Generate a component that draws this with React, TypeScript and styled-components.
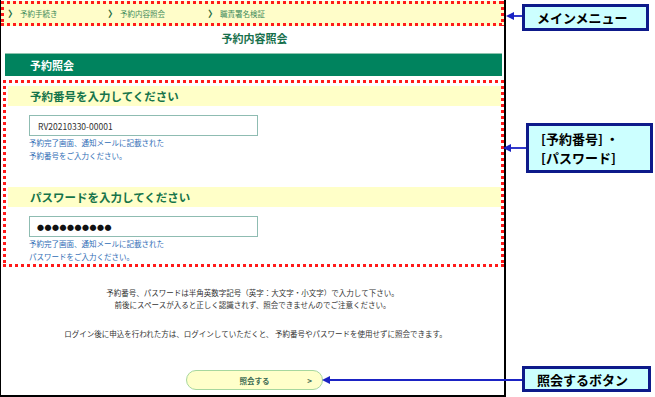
import styled, { createGlobalStyle } from "styled-components"

const GlobalStyle = createGlobalStyle`
    html, body {
        margin: 0;
        padding: 0;
        background: #ffffff;
    }
    body {
        font-family: "Noto Sans CJK JP", "Noto Sans", sans-serif;
        color: #333333;
    }
`

const menuItems = ["予約手続き", "予約内容照会", "職責署名検証"]

const fields = [
    { title: "予約番号を入力してください", value: "RV20210330-00001", hint: "予約番号をご入力ください。", dots: false },
    { title: "パスワードを入力してください", value: "●●●●●●●●●●", hint: "パスワードをご入力ください。", dots: true },
]

const callouts = [
    { top: 4, left: 522, width: 127, height: 27, lines: ["メインメニュー"] },
    { top: 123, left: 526, width: 127, height: 50, lines: ["[予約番号] ・", "[パスワード]"] },
    { top: 366, left: 522, width: 129, height: 26, lines: ["照会するボタン"] },
]

// arrow lines: from callout box to target (x1 -> x2), head at x2
const arrows = [
    { y: 16, from: 522, to: 506 },
    { y: 148, from: 526, to: 503 },
    { y: 380, from: 522, to: 322 },
]

export default function App() {
    return (
        <>
            <GlobalStyle />
            <Page>
                <Screen>
                    <MenuBar>
                        {menuItems.map((item) => (
                            <MenuItem key={item}>
                                <Chevron>〉</Chevron>
                                {item}
                            </MenuItem>
                        ))}
                    </MenuBar>
                    <PageTitle>予約内容照会</PageTitle>
                    <SectionBar>予約照会</SectionBar>
                    <FormFrame>
                        {fields.map((field, index) => (
                            <Field key={field.title} $first={index === 0}>
                                <FieldHeader>{field.title}</FieldHeader>
                                <InputBox $dots={field.dots}>{field.value}</InputBox>
                                <Hint>
                                    予約完了画面、通知メールに記載された
                                    <br />
                                    {field.hint}
                                </Hint>
                            </Field>
                        ))}
                    </FormFrame>
                    <Notes>
                        予約番号、パスワードは半角英数字記号（英字：大文字・小文字）で入力して下さい。
                        <br />
                        前後にスペースが入ると正しく認識されず、照会できませんのでご注意ください。
                    </Notes>
                    <LoginNote>
                        ログイン後に申込を行われた方は、ログインしていただくと、 予約番号やパスワードを使用せずに照会できます。
                    </LoginNote>
                    <SubmitButton>
                        照会する
                        <ButtonArrow>&gt;</ButtonArrow>
                    </SubmitButton>
                </Screen>

                <Arrows width="655" height="397" viewBox="0 0 655 397">
                    {arrows.map((a) => (
                        <g key={a.y}>
                            <line x1={a.from} y1={a.y} x2={a.to + 6} y2={a.y} stroke="#1b23c4" strokeWidth="1.8" />
                            <polygon
                                points={`${a.to},${a.y} ${a.to + 8},${a.y - 4} ${a.to + 8},${a.y + 4}`}
                                fill="#1b23c4"
                            />
                        </g>
                    ))}
                </Arrows>

                {callouts.map((c) => (
                    <Callout
                        key={c.lines[0]}
                        style={{ top: c.top, left: c.left, width: c.width, height: c.height }}
                    >
                        {c.lines.map((line) => (
                            <div key={line}>{line}</div>
                        ))}
                    </Callout>
                ))}
            </Page>
        </>
    )
}

const dotted = `
    background-image:
        repeating-linear-gradient(90deg, #ff1a1a 0 3px, transparent 3px 6px),
        repeating-linear-gradient(90deg, #ff1a1a 0 3px, transparent 3px 6px),
        repeating-linear-gradient(180deg, #ff1a1a 0 3px, transparent 3px 6px),
        repeating-linear-gradient(180deg, #ff1a1a 0 3px, transparent 3px 6px);
    background-size: 100% 3px, 100% 3px, 3px 100%, 3px 100%;
    background-position: top left, bottom left, top left, top right;
    background-repeat: no-repeat;
`

const Page = styled.div`
    position: relative;
    width: 655px;
    height: 397px;
    overflow: hidden;
`

const Screen = styled.div`
    box-sizing: border-box;
    width: 506px;
    height: 397px;
    border-left: 1px solid #000;
    border-right: 2px solid #000;
    border-bottom: 2px solid #000;
    display: flex;
    flex-direction: column;
`

const MenuBar = styled.div`
    ${dotted}
    background-color: #fffdc9;
    box-sizing: border-box;
    height: 25px;
    margin-top: 1px;
    display: flex;
    align-items: center;
    padding-left: 7px;
`

const MenuItem = styled.div`
    width: 100px;
    font-size: 7.5px;
    color: #3d8a5a;
    display: flex;
    align-items: center;
`

const Chevron = styled.span`
    font-size: 9px;
    font-weight: 900;
    margin-right: 3px;
    color: #1f6b40;
`

const PageTitle = styled.div`
    height: 24px;
    line-height: 24px;
    text-align: center;
    font-size: 11px;
    font-weight: bold;
    color: #17704c;
    padding-left: 4px;
`

const SectionBar = styled.div`
    margin: 3px 2px 0 4px;
    height: 23px;
    line-height: 23px;
    padding-left: 25px;
    background: #00835e;
    border-top: 1px solid #8cc4ae;
    box-sizing: border-box;
    color: #fff;
    font-size: 11px;
    font-weight: bold;
`

const FormFrame = styled.div`
    ${dotted}
    margin: 4px 0 0 2px;
    padding: 6px 3px 4px 5px;
    height: 187px;
    box-sizing: border-box;
    display: flex;
    flex-direction: column;
`

const Field = styled.div<{ $first: boolean }>`
    margin-top: ${(p) => (p.$first ? "0" : "25px")};
    display: flex;
    flex-direction: column;
`

const FieldHeader = styled.div`
    height: 20px;
    line-height: 20px;
    background: #ffffc8;
    padding-left: 22px;
    font-size: 11.5px;
    font-weight: bold;
    color: #16744a;
`

const InputBox = styled.div<{ $dots: boolean }>`
    margin: 9px 0 0 21px;
    width: 229px;
    height: 21px;
    box-sizing: border-box;
    border: 1px solid #8fbcb2;
    padding-left: ${(p) => (p.$dots ? "7px" : "8px")};
    display: flex;
    align-items: center;
    font-size: ${(p) => (p.$dots ? "7px" : "8.5px")};
    letter-spacing: ${(p) => (p.$dots ? "0.5px" : "0")};
    color: ${(p) => (p.$dots ? "#111" : "#333")};
`

const Hint = styled.div`
    margin-left: 21px;
    font-size: 7.5px;
    line-height: 13px;
    color: #2f6db5;
`

const Notes = styled.div`
    margin-top: 20px;
    text-align: center;
    font-size: 7.5px;
    line-height: 12px;
    color: #333;
`

const LoginNote = styled(Notes)`
    margin-top: 17px;
    padding-left: 6px;
`

const SubmitButton = styled.div`
    position: relative;
    margin: 30px 0 0 185px;
    width: 137px;
    height: 20px;
    box-sizing: border-box;
    border: 1.5px solid #a7d79e;
    border-radius: 10px;
    background: #ffffca;
    display: flex;
    align-items: center;
    justify-content: center;
    font-size: 7.5px;
    font-weight: bold;
    color: #3d6b52;
`

const ButtonArrow = styled.span`
    position: absolute;
    right: 10px;
    font-size: 8px;
    font-weight: bold;
`

const Arrows = styled.svg`
    position: absolute;
    top: 0;
    left: 0;
    pointer-events: none;
`

const Callout = styled.div`
    position: absolute;
    box-sizing: border-box;
    border: 3px solid #0d1a8a;
    background: #ccffff;
    padding-left: 12px;
    display: flex;
    flex-direction: column;
    justify-content: center;
    font-size: 13px;
    font-weight: 600;
    line-height: 19px;
    color: #000;
`
